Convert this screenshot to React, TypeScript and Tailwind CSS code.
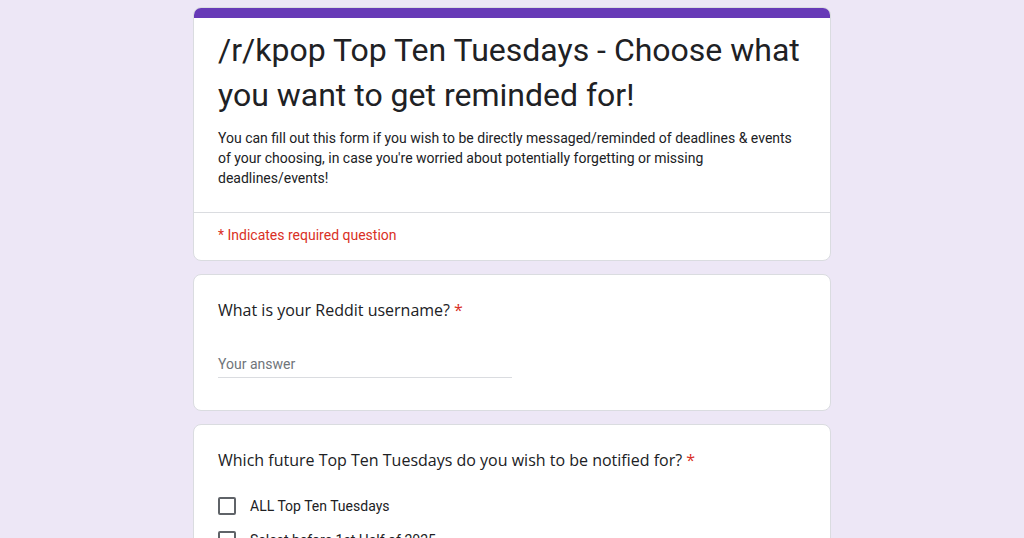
import React from 'react';

const options = ['ALL Top Ten Tuesdays', 'Select before 1st Half of 2025'];

const Required = () => <span className="text-[#d93025] ml-1">*</span>;

export default function App() {
    return (
        <div className="min-h-screen bg-[#ede7f6] flex justify-center pt-[7px]" style={{ fontFamily: 'Roboto, "Liberation Sans", sans-serif' }}>
            <div className="w-[638px] flex flex-col gap-[13px]">
                {/* Header card */}
                <div className="bg-white rounded-lg border border-[#dadce0] overflow-hidden">
                    <div className="h-[10px] bg-[#673ab7]" />
                    <div className="px-6 pt-[10px] pb-6">
                        <h1 className="text-[32px] leading-[45px] text-[#202124]" style={{ fontFamily: 'Roboto, sans-serif' }}>
                            /r/kpop Top Ten Tuesdays - Choose what you want to get reminded for!
                        </h1>
                        <p className="mt-[10px] text-[14px] leading-[20px] text-[#202124]">
                            You can fill out this form if you wish to be directly messaged/reminded of deadlines &amp; events of your choosing, in case you're worried about potentially forgetting or missing deadlines/events!
                        </p>
                    </div>
                    <div className="border-t border-[#dadce0] px-6 pt-[12px] pb-[15px] text-[14px] leading-[20px] text-[#d93025]">
                        * Indicates required question
                    </div>
                </div>

                {/* Username */}
                <div className="bg-white rounded-lg border border-[#dadce0] px-6 pt-[23px] pb-[32px]">
                    <div className="text-[16px] leading-6 text-[#202124]" style={{ fontFamily: '"Open Sans", sans-serif' }}>
                        What is your Reddit username?<Required />
                    </div>
                    <div className="mt-[32px] w-[294px] border-b border-[#dadce0] pb-[3px] text-[14px] leading-5 text-[#70757a]">
                        Your answer
                    </div>
                </div>

                {/* Checkboxes */}
                <div className="bg-white rounded-lg border border-[#dadce0] px-6 pt-[23px] pb-6">
                    <div className="text-[16px] leading-6 text-[#202124]" style={{ fontFamily: '"Open Sans", sans-serif' }}>
                        Which future Top Ten Tuesdays do you wish to be notified for?<Required />
                    </div>
                    <div className="mt-[24px] flex flex-col gap-[14px]">
                        {options.map((o) => (
                            <label key={o} className="flex items-center gap-[14px] text-[14px] leading-5 text-[#202124]">
                                <span className="w-[18px] h-[18px] border-2 border-[#5f6368] rounded-[2px]" />
                                {o}
                            </label>
                        ))}
                    </div>
                </div>
            </div>
        </div>
    );
}
